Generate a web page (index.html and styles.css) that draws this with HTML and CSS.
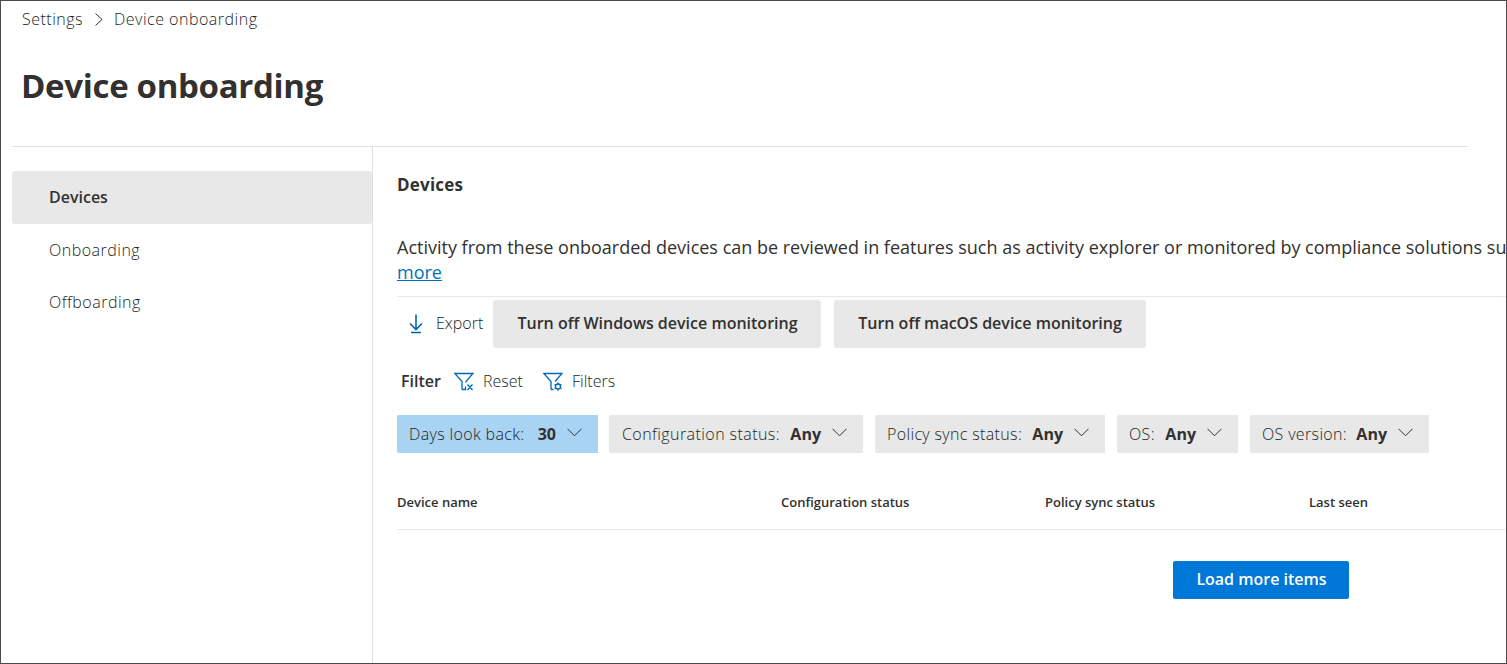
FILE: index.html
```html
<!DOCTYPE html>
<html lang="en">
<head>
<meta charset="utf-8">
<title>Device onboarding</title>
<link rel="stylesheet" href="styles.css">
</head>
<body>
<div class="frame">
  <header class="header">
    <nav class="crumbs">
      <a class="crumb-root">Settings</a>
      <svg class="crumb-sep" width="8" height="13" viewBox="0 0 8 13"><path d="M.5 .5l6.500 6-6.500 6"/></svg>
      <span class="crumb-current">Device onboarding</span>
    </nav>
    <h1 class="title">Device onboarding</h1>
  </header>
  <div class="body">
    <nav class="side">
      <a class="side-item side-active">Devices</a>
      <a class="side-item">Onboarding</a>
      <a class="side-item">Offboarding</a>
    </nav>
    <main class="main">
      <h2 class="heading">Devices</h2>
      <p class="intro">Activity from these onboarded devices can be reviewed in features such as activity explorer or monitored by compliance solutions su<br><a class="link">more</a></p>
      <div class="toolbar">
        <svg class="icon export-icon" width="14" height="20" viewBox="0 0 14 20"><path d="M7 .5v15M1 9.500l6 6 6-6M2 18.500h10"/></svg>
        <span class="export">Export</span>
        <button class="btn btn-windows">Turn off Windows device monitoring</button>
        <button class="btn btn-mac">Turn off macOS device monitoring</button>
      </div>
      <div class="filterbar">
        <b class="filter-label">Filter</b>
        <svg class="icon" width="20" height="19" viewBox="0 0 20 19"><path d="M8 17.500V9.500L.8 1.500h18.200l-7 8v1M8 17.500h3.500v-3M13.500 12.500l5 5.500M18.500 12.500l-5 5.500"/></svg>
        <span class="filter-reset">Reset</span>
        <svg class="icon" width="20" height="19" viewBox="0 0 20 19"><path d="M8 17.500V9.500L.8 1.500h18.200l-7 8M8 17.500h2.500"/><circle cx="15" cy="14.500" r="2.500"/><path d="M15 10.500v1.500M15 17v1.700M11.500 12.500l1.300.8M17.200 15.800l1.300.8M18.500 12.500l-1.300.8M12.800 15.800l-1.300.8"/></svg>
        <span class="filter-more">Filters</span>
      </div>
      <div class="chips">
        <div class="chip chip-on chip-days"><span>Days look back:</span><b>30</b><svg class="chev" width="15" height="9" viewBox="0 0 15 9"><path d="M.5 .8l7 7 7-7"/></svg></div>
        <div class="chip chip-config"><span>Configuration status:</span><b>Any</b><svg class="chev" width="15" height="9" viewBox="0 0 15 9"><path d="M.5 .8l7 7 7-7"/></svg></div>
        <div class="chip chip-policy"><span>Policy sync status:</span><b>Any</b><svg class="chev" width="15" height="9" viewBox="0 0 15 9"><path d="M.5 .8l7 7 7-7"/></svg></div>
        <div class="chip chip-os"><span>OS:</span><b>Any</b><svg class="chev" width="15" height="9" viewBox="0 0 15 9"><path d="M.5 .8l7 7 7-7"/></svg></div>
        <div class="chip chip-version"><span>OS version:</span><b>Any</b><svg class="chev" width="15" height="9" viewBox="0 0 15 9"><path d="M.5 .8l7 7 7-7"/></svg></div>
      </div>
      <div class="thead">
        <span>Device name</span><span>Configuration status</span><span>Policy sync status</span><span>Last seen</span>
      </div>
      <button class="load">Load more items</button>
    </main>
  </div>
</div>
</body>
</html>
```
FILE: styles.css
```css
* { box-sizing: border-box; }
body { margin: 0; background: #fff; color: #201f1e; font: 300 16px/22px "Open Sans", "Noto Sans", sans-serif; }
b, button, h1, h2 { font-family: inherit; margin: 0; color: #323130; }
svg { flex: none; fill: none; }
.frame { width: 1507px; height: 664px; border: 1px solid #4d4a4c; overflow: hidden; display: flex; flex-direction: column; }
.header { height: 146px; margin: 0 38px 0 11px; padding: 7px 0 0 10px; border-bottom: 1px solid #e1dfdd; flex: none; }
.crumbs { display: flex; align-items: center; height: 22px; white-space: nowrap; letter-spacing: .5px; }
.crumb-root { width: 73px; }
.crumb-sep { stroke: #323130; margin-right: 11px; }
.title { font-size: 33px; line-height: 44px; font-weight: 700; margin: 34px 0 0 -1px; white-space: nowrap; letter-spacing: -.32px; }
.body { flex: 1; display: flex; padding-left: 11px; }
.side { width: 361px; flex: none; border-right: 1px solid #e1dfdd; padding-top: 24px; }
.side-item { display: flex; align-items: center; height: 52px; padding-left: 37px; letter-spacing: .5px; }
.side-active { height: 53px; padding-bottom: 2px; background: #e8e8e8; border-radius: 3px; color: #323130; font-weight: 600; letter-spacing: 0; }
.main { flex: 1; min-width: 0; padding-left: 24px; display: flex; flex-direction: column; }
.heading { font-size: 17px; line-height: 24px; font-weight: 700; margin-top: 26px; letter-spacing: .2px; }
.intro { margin: 38px 0 0; height: 62px; padding-bottom: 10px; border-bottom: 1px solid #e8e8e8; color: #323130; font-size: 18px; line-height: 25px; font-weight: 400; white-space: nowrap; }
.link { color: #0072b8; text-decoration: underline; }
.toolbar { display: flex; align-items: center; height: 48px; margin-top: 3px; }
.icon { stroke: #0067b8; stroke-width: 1.3; }
.export-icon { margin-left: 12px; stroke-width: 1.6; }
.export { margin-left: 12px; width: 58px; padding: 0 0 2px 1px; }
.btn { height: 48px; border: 0; border-radius: 3px; background: #e8e8e8; font-size: 16px; font-weight: 600; padding: 0 0 2px; white-space: nowrap; }
.btn-windows { width: 328px; padding-left: 1px; }
.btn-mac { width: 312px; margin-left: 13px; }
.filterbar { display: flex; align-items: center; height: 24px; margin-top: 21px; padding-left: 4px; }
.filter-label { width: 53px; font-weight: 600; }
.filter-reset { width: 60px; margin-left: 9px; }
.filter-more { margin-left: 9px; }
.chips { display: flex; gap: 12px; margin-top: 22px; }
.chip { height: 38px; background: #e8e8e8; border-radius: 2px 0 0 2px; padding-left: 12px; display: flex; align-items: center; white-space: nowrap; letter-spacing: .35px; }
.chip b { margin: 0 11px 0 auto; font-weight: 700; letter-spacing: 0; }
.chev { stroke: #323130; stroke-width: 1; margin: 0 16px 4px 0; }
.chip-on { background: #a9d3f2; }
.chip-days { width: 201px; margin-right: -1px; }
.chip-config { width: 254px; padding-left: 13px; letter-spacing: .43px; }
.chip-policy { width: 230px; }
.chip-os { width: 121px; }
.chip-version { width: 179px; }
.thead { display: grid; grid-template-columns: 384px 264px 264px 1fr; height: 77px; padding-top: 39px; border-bottom: 1px solid #e8e8e8; color: #323130; font-size: 13px; line-height: 20px; font-weight: 600; white-space: nowrap; }
.load { width: 176px; height: 38px; margin: 31px 0 0 776px; border: 0; border-radius: 2px; background: #0078d7; color: #fff; font-size: 16px; font-weight: 600; padding: 0 0 2px 1px; }
```
